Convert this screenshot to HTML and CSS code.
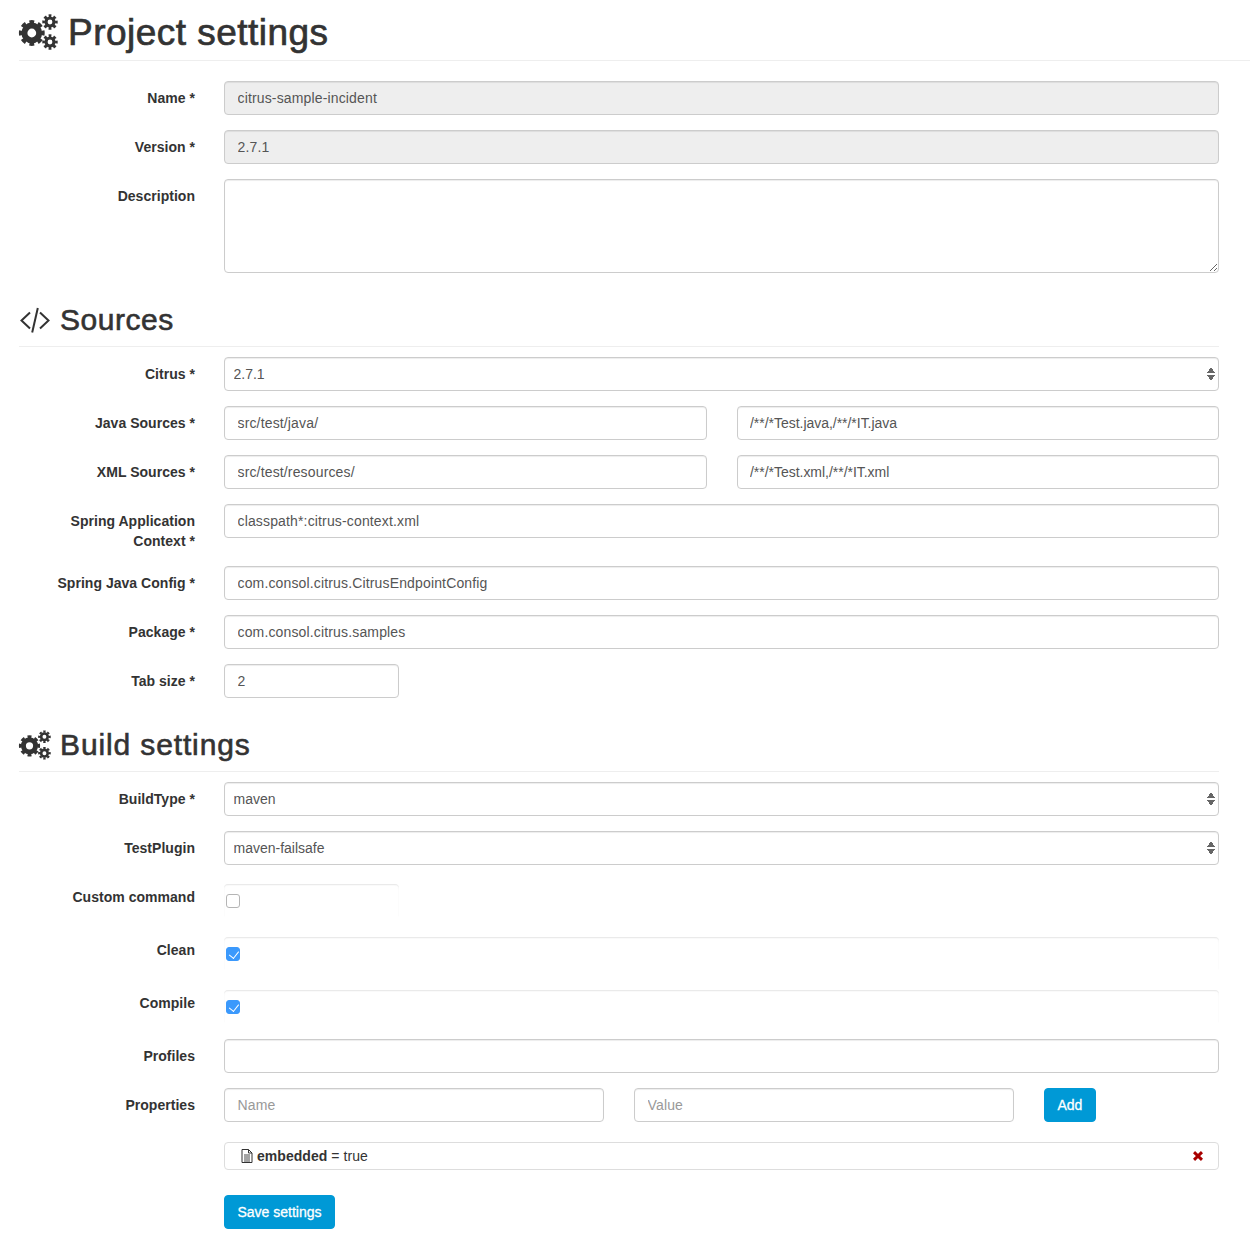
FILE: index.html
```html
<!DOCTYPE html>
<html lang="en">
<head>
<meta charset="utf-8">
<title>Project settings</title>
<link rel="stylesheet" href="styles.css">
</head>
<body>
<svg class="defs" width="0" height="0" aria-hidden="true">
  <symbol id="gears" viewBox="0 0 39 36" overflow="visible">
    <g fill="none" stroke="#333">
      <circle cx="12.800" cy="19" r="7.400" stroke-width="6"/>
      <circle cx="12.800" cy="19" r="11.200" stroke-width="3.400" pathLength="16" stroke-dasharray="1.1 0.9" stroke-dashoffset="0.55"/>
      <circle cx="31" cy="8" r="4" stroke-width="3.200"/>
      <circle cx="31" cy="8" r="6.400" stroke-width="2.600" pathLength="16" stroke-dasharray="1.15 0.85" stroke-dashoffset="0.57"/>
      <circle cx="31" cy="28" r="4" stroke-width="3.200"/>
      <circle cx="31" cy="28" r="6.400" stroke-width="2.600" pathLength="16" stroke-dasharray="1.15 0.85" stroke-dashoffset="0.57"/>
    </g>
  </symbol>
</svg>

<main class="page">
  <h1 class="title">
    <svg class="icon-gears-lg"><use href="#gears"/></svg>
    <span>Project settings</span>
  </h1>

  <form class="settings">
    <div class="row">
      <label class="lbl">Name *</label>
      <input class="field" type="text" value="citrus-sample-incident" disabled>
    </div>
    <div class="row">
      <label class="lbl">Version *</label>
      <input class="field" type="text" value="2.7.1" disabled>
    </div>
    <div class="row">
      <label class="lbl">Description</label>
      <textarea class="field area"></textarea>
    </div>

    <h2 class="section">
      <svg class="icon-code" viewBox="0 0 31 28" fill="none" stroke="#333" stroke-width="2">
        <path d="M10.500 6.500 2 14.500l8.500 8"/>
        <path d="M20.500 6.500l8.500 8-8.500 8"/>
        <path d="M18.300 2 12.700 26.500"/>
      </svg>
      <span class="section-sources">Sources</span>
    </h2>

    <div class="row">
      <label class="lbl">Citrus *</label>
      <div class="select-wrap">
        <select class="field select"><option>2.7.1</option></select>
        <span class="arrows"></span>
      </div>
    </div>
    <div class="row">
      <label class="lbl">Java Sources *</label>
      <div class="pair">
        <input class="field" type="text" value="src/test/java/">
        <input class="field glob" type="text" value="/**/*Test.java,/**/*IT.java">
      </div>
    </div>
    <div class="row">
      <label class="lbl">XML Sources *</label>
      <div class="pair">
        <input class="field" type="text" value="src/test/resources/">
        <input class="field glob" type="text" value="/**/*Test.xml,/**/*IT.xml">
      </div>
    </div>
    <div class="row">
      <label class="lbl">Spring Application Context *</label>
      <input class="field" type="text" value="classpath*:citrus-context.xml">
    </div>
    <div class="row">
      <label class="lbl">Spring Java Config *</label>
      <input class="field" type="text" value="com.consol.citrus.CitrusEndpointConfig">
    </div>
    <div class="row">
      <label class="lbl">Package *</label>
      <input class="field" type="text" value="com.consol.citrus.samples">
    </div>
    <div class="row">
      <label class="lbl">Tab size *</label>
      <input class="field narrow" type="text" value="2">
    </div>

    <h2 class="section">
      <svg class="icon-gears-md"><use href="#gears"/></svg>
      <span class="section-build">Build settings</span>
    </h2>

    <div class="row">
      <label class="lbl">BuildType *</label>
      <div class="select-wrap">
        <select class="field select"><option>maven</option></select>
        <span class="arrows"></span>
      </div>
    </div>
    <div class="row">
      <label class="lbl">TestPlugin</label>
      <div class="select-wrap">
        <select class="field select"><option>maven-failsafe</option></select>
        <span class="arrows"></span>
      </div>
    </div>
    <div class="row">
      <label class="lbl">Custom command</label>
      <div class="check-box narrow"><input class="check" type="checkbox"></div>
    </div>
    <div class="row">
      <label class="lbl">Clean</label>
      <div class="check-box"><input class="check" type="checkbox" checked></div>
    </div>
    <div class="row">
      <label class="lbl">Compile</label>
      <div class="check-box"><input class="check" type="checkbox" checked></div>
    </div>
    <div class="row">
      <label class="lbl">Profiles</label>
      <input class="field" type="text">
    </div>
    <div class="row">
      <label class="lbl">Properties</label>
      <div class="props">
        <input class="field" type="text" placeholder="Name">
        <input class="field" type="text" placeholder="Value">
        <button class="btn" type="button">Add</button>
      </div>
    </div>
    <div class="row row-list">
      <span></span>
      <div class="prop-item">
        <svg class="icon-doc" viewBox="0 0 12 14" fill="none" stroke="#333" stroke-width="1">
          <path d="M1 .5h6.500L11 4v9.500H1z"/>
          <path d="M7.500.5V4H11"/>
          <path d="M3 6h6M3 8h6M3 10h6M3 12h6" stroke-width=".9"/>
        </svg>
        <span class="prop-text"><b>embedded</b> = true</span>
        <svg class="icon-x" viewBox="0 0 10 10" stroke="#a80000" stroke-width="3" fill="none">
          <path d="M1 1.200l8 7.600M9 1.200 1 8.800"/>
        </svg>
      </div>
    </div>
    <div class="row row-save">
      <span></span>
      <div><button class="btn" type="button">Save settings</button></div>
    </div>
  </form>
</main>
</body>
</html>
```

FILE: styles.css
```css
* {
  box-sizing: border-box;
}

html,
body {
  margin: 0;
  padding: 0;
  background: #fff;
}

body {
  font-family: "Liberation Sans", Arial, sans-serif;
  font-size: 14px;
  line-height: 20px;
  color: #333;
  overflow: hidden;
}

.defs {
  position: absolute;
}

.page {
  padding: 13px 0 16px 19px;
}

.title {
  display: flex;
  align-items: center;
  gap: 10px;
  height: 48px;
  margin: 0 0 20px;
  padding-bottom: 7px;
  border-bottom: 1px solid #eee;
  font-size: 37px;
  line-height: 40px;
  font-weight: 400;
  letter-spacing: .47px;
  -webkit-text-stroke: 0.7px #333;
}

.icon-gears-lg {
  width: 39px;
  height: 36px;
  flex: none;
  margin-bottom: 2px;
  overflow: visible;
}

.settings {
  width: 1200px;
}

.row {
  display: grid;
  grid-template-columns: 176px 995px;
  column-gap: 29px;
  margin-bottom: 15px;
}

.lbl {
  padding-top: 7px;
  font-weight: 700;
  text-align: right;
  letter-spacing: .03px;
}

.field {
  display: block;
  width: 100%;
  height: 34px;
  padding: 6px 12px 6px 12.500px;
  border: 1px solid #ccc;
  border-radius: 4px;
  background: #fff;
  box-shadow: inset 0 1px 1px rgba(0, 0, 0, .075);
  color: #555;
  font-family: inherit;
  font-size: 14px;
  line-height: 20px;
  letter-spacing: .15px;
}

.field:disabled {
  background: #eee;
  opacity: 1;
}

.field::placeholder {
  color: #999;
  opacity: 1;
}

.glob {
  padding-left: 12px;
  letter-spacing: -.03px;
}

.area {
  height: 94px;
  resize: vertical;
}

.narrow {
  width: 175px;
}

.section {
  display: flex;
  align-items: center;
  gap: 9px;
  margin: 30px 0 10px;
  padding-bottom: 10px;
  border-bottom: 1px solid #eee;
  font-size: 30px;
  line-height: 33px;
  font-weight: 400;
  -webkit-text-stroke: 0.6px #333;
}

.section-sources {
  letter-spacing: .55px;
}

.section-build {
  letter-spacing: .87px;
}

.icon-code {
  width: 32px;
  height: 28px;
  flex: none;
}

.icon-gears-md {
  width: 32px;
  height: 30px;
  flex: none;
  overflow: visible;
}

.select-wrap {
  position: relative;
}

.select {
  appearance: none;
  -webkit-appearance: none;
  padding: 6px 8.500px;
  letter-spacing: 0;
}

.arrows {
  position: absolute;
  top: 10px;
  right: 4px;
  width: 8px;
  height: 14px;
  background:
    linear-gradient(to bottom right, transparent 50%, #666 50%) 0 0 / 4px 6px no-repeat,
    linear-gradient(to bottom left, transparent 50%, #666 50%) 4px 0 / 4px 6px no-repeat,
    linear-gradient(to top right, transparent 50%, #666 50%) 0 8px / 4px 6px no-repeat,
    linear-gradient(to top left, transparent 50%, #666 50%) 4px 8px / 4px 6px no-repeat;
}

.pair {
  display: grid;
  grid-template-columns: 483px 482px;
  column-gap: 30px;
}

.props {
  display: grid;
  grid-template-columns: 380px 380px auto;
  justify-content: start;
  column-gap: 30px;
}

.check-box {
  height: 34px;
  margin-top: 4px;
  padding: 10px 2px 0;
  border-radius: 4px;
  box-shadow: inset 0 1px 1px rgba(0, 0, 0, .075), inset 1px 2px 2px rgba(0, 0, 0, .012), inset -1px 2px 2px rgba(0, 0, 0, .012);
  line-height: 0;
}

.check {
  appearance: none;
  -webkit-appearance: none;
  position: relative;
  display: block;
  width: 14px;
  height: 14px;
  margin: 0;
  border: 1px solid #b5b5b5;
  border-radius: 3px;
  background: #fff;
}

.check:checked {
  border-color: #3b99fc;
  background: #3b99fc;
}

.check:checked::after {
  content: "";
  position: absolute;
  left: 3.500px;
  top: .5px;
  width: 4.500px;
  height: 8px;
  border-right: 1.700px solid #fff;
  border-bottom: 1.700px solid #fff;
  transform: rotate(38deg);
}

.btn {
  height: 34px;
  padding: 6px 12.500px;
  border: 1px solid #0099d6;
  border-radius: 4px;
  background: #0099d6;
  color: #fff;
  font-family: inherit;
  font-size: 14px;
  line-height: 20px;
  -webkit-text-stroke: 0.3px #fff;
}

.row-list {
  margin-top: 20px;
  margin-bottom: 25px;
}

.prop-item {
  display: flex;
  align-items: center;
  height: 28px;
  padding: 0 15px 0 16px;
  border: 1px solid #ddd;
  border-radius: 4px;
}

.icon-doc {
  width: 12px;
  height: 14px;
  flex: none;
  margin-right: 4px;
}

.prop-text {
  flex: 1;
  letter-spacing: .05px;
}

.prop-text b {
  font-weight: 700;
}

.icon-x {
  width: 10px;
  height: 10px;
  flex: none;
}

.row-save {
  margin-bottom: 0;
}
```
